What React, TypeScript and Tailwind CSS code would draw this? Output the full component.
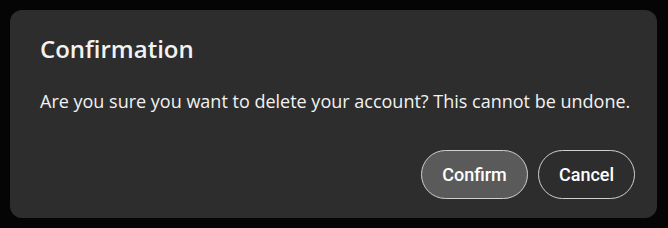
import React from "react";

export default function App() {
  return (
    <div className="w-[668px] h-[228px] bg-[#050505] p-[10px] pr-[11px]">
      <div className="h-[208px] rounded-xl bg-[#2d2d2d] pl-[30px] pr-[22px] pt-[23px] pb-[19px] flex flex-col text-[#f2f2f2] [font-family:'Open_Sans','Noto_Sans',sans-serif]">
        <h2 className="text-[24px] leading-[32px] font-semibold">Confirmation</h2>
        <p className="mt-[24px] text-[18px] leading-[24px]">
          Are you sure you want to delete your account? This cannot be undone.
        </p>
        <div className="mt-auto flex justify-end gap-[10px] [font-family:Roboto,'Liberation_Sans',Arial,sans-serif]">
          <button className="h-[49px] w-[107px] rounded-full border border-[#d0d0d0] bg-[#5a5a5a] text-[18px] font-medium text-white">
            Confirm
          </button>
          <button className="h-[49px] w-[97px] rounded-full border border-[#d0d0d0] bg-[#2d2d2d] text-[18px] font-medium text-white">
            Cancel
          </button>
        </div>
      </div>
    </div>
  );
}
